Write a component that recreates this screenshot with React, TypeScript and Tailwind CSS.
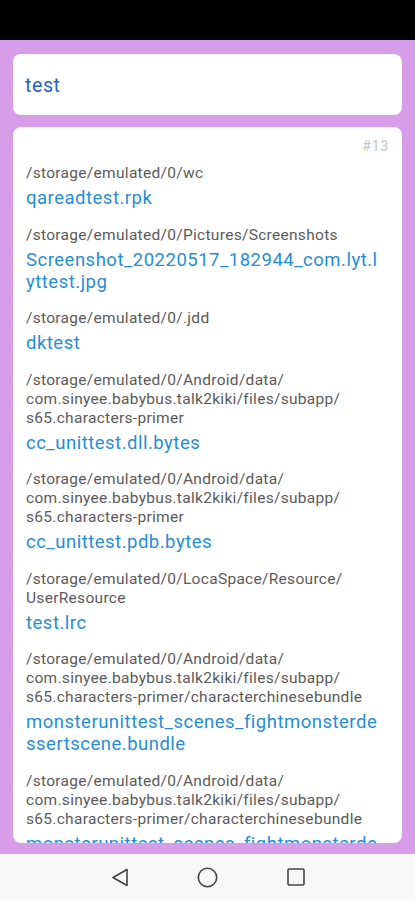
import type { ReactNode } from 'react'

type Entry = { path: string[]; name: string[] }

const primerPath = ['/storage/emulated/0/Android/data/', 'com.sinyee.babybus.talk2kiki/files/subapp/', 's65.characters-primer']
const bundlePath = [
  '/storage/emulated/0/Android/data/',
  'com.sinyee.babybus.talk2kiki/files/subapp/',
  's65.characters-primer/characterchinesebundle',
]

const entries: Entry[] = [
  { path: ['/storage/emulated/0/wc'], name: ['qareadtest.rpk'] },
  {
    path: ['/storage/emulated/0/Pictures/Screenshots'],
    name: ['Screenshot_20220517_182944_com.lyt.l', 'yttest.jpg'],
  },
  { path: ['/storage/emulated/0/.jdd'], name: ['dktest'] },
  { path: primerPath, name: ['cc_unittest.dll.bytes'] },
  { path: primerPath, name: ['cc_unittest.pdb.bytes'] },
  { path: ['/storage/emulated/0/LocaSpace/Resource/', 'UserResource'], name: ['test.lrc'] },
  { path: bundlePath, name: ['monsterunittest_scenes_fightmonsterde', 'ssertscene.bundle'] },
  { path: bundlePath, name: ['monsterunittest_scenes_fightmonsterde', 'ssertscene.bundle'] },
]

function Lines({ lines, className }: { lines: string[]; className: string }) {
  return (
    <div className={className}>
      {lines.map((l, i) => (
        <div key={i} className="whitespace-nowrap">
          {l}
        </div>
      ))}
    </div>
  )
}

function NavButton({ children }: { children: ReactNode }) {
  return <div className="flex h-[22px] w-[22px] items-center justify-center">{children}</div>
}

export default function App() {
  return (
    <div className="flex h-[900px] w-[415px] flex-col overflow-hidden font-['Roboto',sans-serif]">
      <div className="h-[40px] shrink-0 bg-black" />

      <div className="flex min-h-0 flex-1 flex-col gap-[12px] bg-[#d89de8] px-[13px] pt-[14px] pb-[11px]">
        <div className="flex h-[61px] shrink-0 items-center rounded-[8px] bg-white px-[12px] pt-[2px]">
          <span className="text-[19.5px] tracking-[0.6px] text-[#2563c9]">test</span>
        </div>

        <div className="relative min-h-0 flex-1 overflow-hidden rounded-[8px] bg-white px-[13px] pt-[37px]">
          <span className="absolute top-[9px] right-[13px] text-[14px] tracking-[0.8px] text-[#c4c4c4]">#13</span>
          <div className="flex flex-col gap-[16.5px]">
            {entries.map((e, i) => (
              <div key={i} className="flex flex-col gap-[4px]">
                <Lines lines={e.path} className="text-[15.5px] leading-[19px] tracking-[0.3px] text-[#5a5a5a]" />
                <Lines lines={e.name} className="text-[18.5px] leading-[22px] tracking-[0.5px] text-[#1f8ed9]" />
              </div>
            ))}
          </div>
        </div>
      </div>

      <div className="flex h-[46px] shrink-0 items-center justify-center gap-[66px] bg-[#f8f8f8]">
        <NavButton>
          <svg width="18" height="19" viewBox="0 0 18 19" fill="none" stroke="#444" strokeWidth="1.6" strokeLinejoin="round">
            <path d="M16 1.5 L2 9.5 L16 17.5 Z" />
          </svg>
        </NavButton>
        <NavButton>
          <svg width="21" height="21" viewBox="0 0 21 21" fill="none" stroke="#444" strokeWidth="1.6">
            <circle cx="10.5" cy="10.5" r="9.2" />
          </svg>
        </NavButton>
        <NavButton>
          <svg width="18" height="18" viewBox="0 0 18 18" fill="none" stroke="#444" strokeWidth="1.6">
            <rect x="1" y="1" width="16" height="16" rx="1" />
          </svg>
        </NavButton>
      </div>
    </div>
  )
}
